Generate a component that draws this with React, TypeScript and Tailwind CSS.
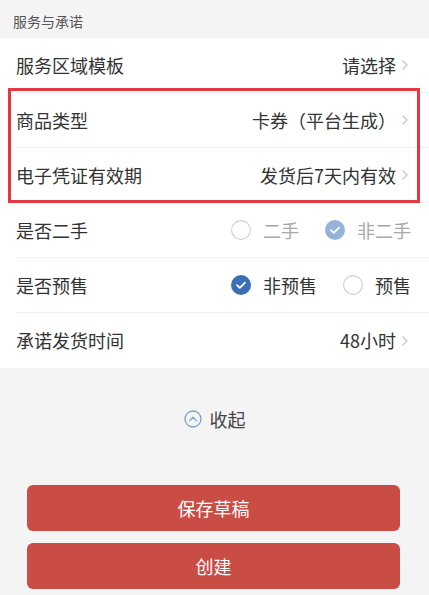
import React from "react";

const Chevron = () => (
  <svg width="8" height="12" viewBox="0 0 8 12" className="ml-[5px] shrink-0">
    <path d="M1.5 1.5 L6 6 L1.5 10.5" fill="none" stroke="#c8c8c8" strokeWidth="1.3" />
  </svg>
);

const Radio = ({ checked, color }: { checked: boolean; color?: string }) =>
  checked ? (
    <svg width="20" height="20" viewBox="0 0 20 20" className="shrink-0">
      <circle cx="10" cy="10" r="10" fill={color} />
      <path d="M6 10.2 L8.8 12.8 L14 7.6" fill="none" stroke="#fff" strokeWidth="1.8" strokeLinecap="round" strokeLinejoin="round" />
    </svg>
  ) : (
    <svg width="20" height="20" viewBox="0 0 20 20" className="shrink-0">
      <circle cx="10" cy="10" r="9.4" fill="#fff" stroke="#cfcfcf" strokeWidth="1.1" />
    </svg>
  );

const Row = ({ label, children, last }: { label: string; children: React.ReactNode; last?: boolean }) => (
  <div className="pl-[16px]">
    <div className={`h-[55px] flex items-center justify-between pr-[20px] ${last ? "" : "border-b border-[#f0f0f0]"}`}>
      <span className="text-[18px] text-[#333]">{label}</span>
      <div className="flex items-center text-[18px] text-[#333]">{children}</div>
    </div>
  </div>
);

export default function App() {
  return (
    <div
      className="w-full min-h-[595px] bg-[#f4f4f4]"
      style={{ fontFamily: '"Noto Sans CJK SC", "Noto Sans", sans-serif' }}
    >
      <div className="h-[38px] flex items-center pl-[13px] pt-[5px] text-[14px] text-[#555]">服务与承诺</div>
      <div className="relative bg-white">
        <Row label="服务区域模板">
          <span>请选择</span>
          <Chevron />
        </Row>
        <Row label="商品类型">
          <span>卡券（平台生成）</span>
          <Chevron />
        </Row>
        <Row label="电子凭证有效期">
          <span>发货后7天内有效</span>
          <Chevron />
        </Row>
        <Row label="是否二手">
          <div className="flex items-center gap-[12px] text-[#a8a8a8] -mr-[2px]">
            <Radio checked={false} />
            <span>二手</span>
            <span className="w-[2px]" />
            <Radio checked color="#95b3d8" />
            <span>非二手</span>
          </div>
        </Row>
        <Row label="是否预售">
          <div className="flex items-center gap-[12px] text-[#333] -mr-[2px]">
            <Radio checked color="#3a6fb8" />
            <span>非预售</span>
            <span className="w-[2px]" />
            <Radio checked={false} />
            <span>预售</span>
          </div>
        </Row>
        <Row label="承诺发货时间" last>
          <span>48小时</span>
          <Chevron />
        </Row>
        <div className="absolute left-[8px] right-[9px] top-[50px] h-[115px] border-[3px] border-[#e3383f] pointer-events-none" />
      </div>
      <div className="h-[104px] flex items-center justify-center pb-[2px] gap-[8px]">
        <svg width="18" height="18" viewBox="0 0 18 18">
          <circle cx="9" cy="9" r="8" fill="none" stroke="#7f9fc8" strokeWidth="1.3" />
          <path d="M5.6 10.6 L9 7.2 L12.4 10.6" fill="none" stroke="#7f9fc8" strokeWidth="1.3" strokeLinecap="round" strokeLinejoin="round" />
        </svg>
        <span className="text-[18px] text-[#444]">收起</span>
      </div>
      <div className="flex flex-col gap-[12px] pl-[27px] pr-[29px] pt-[13px]">
        <button className="h-[46px] rounded-[6px] bg-[#c94d45] text-white text-[18px]">保存草稿</button>
        <button className="h-[46px] rounded-[6px] bg-[#c94d45] text-white text-[18px]">创建</button>
      </div>
    </div>
  );
}
